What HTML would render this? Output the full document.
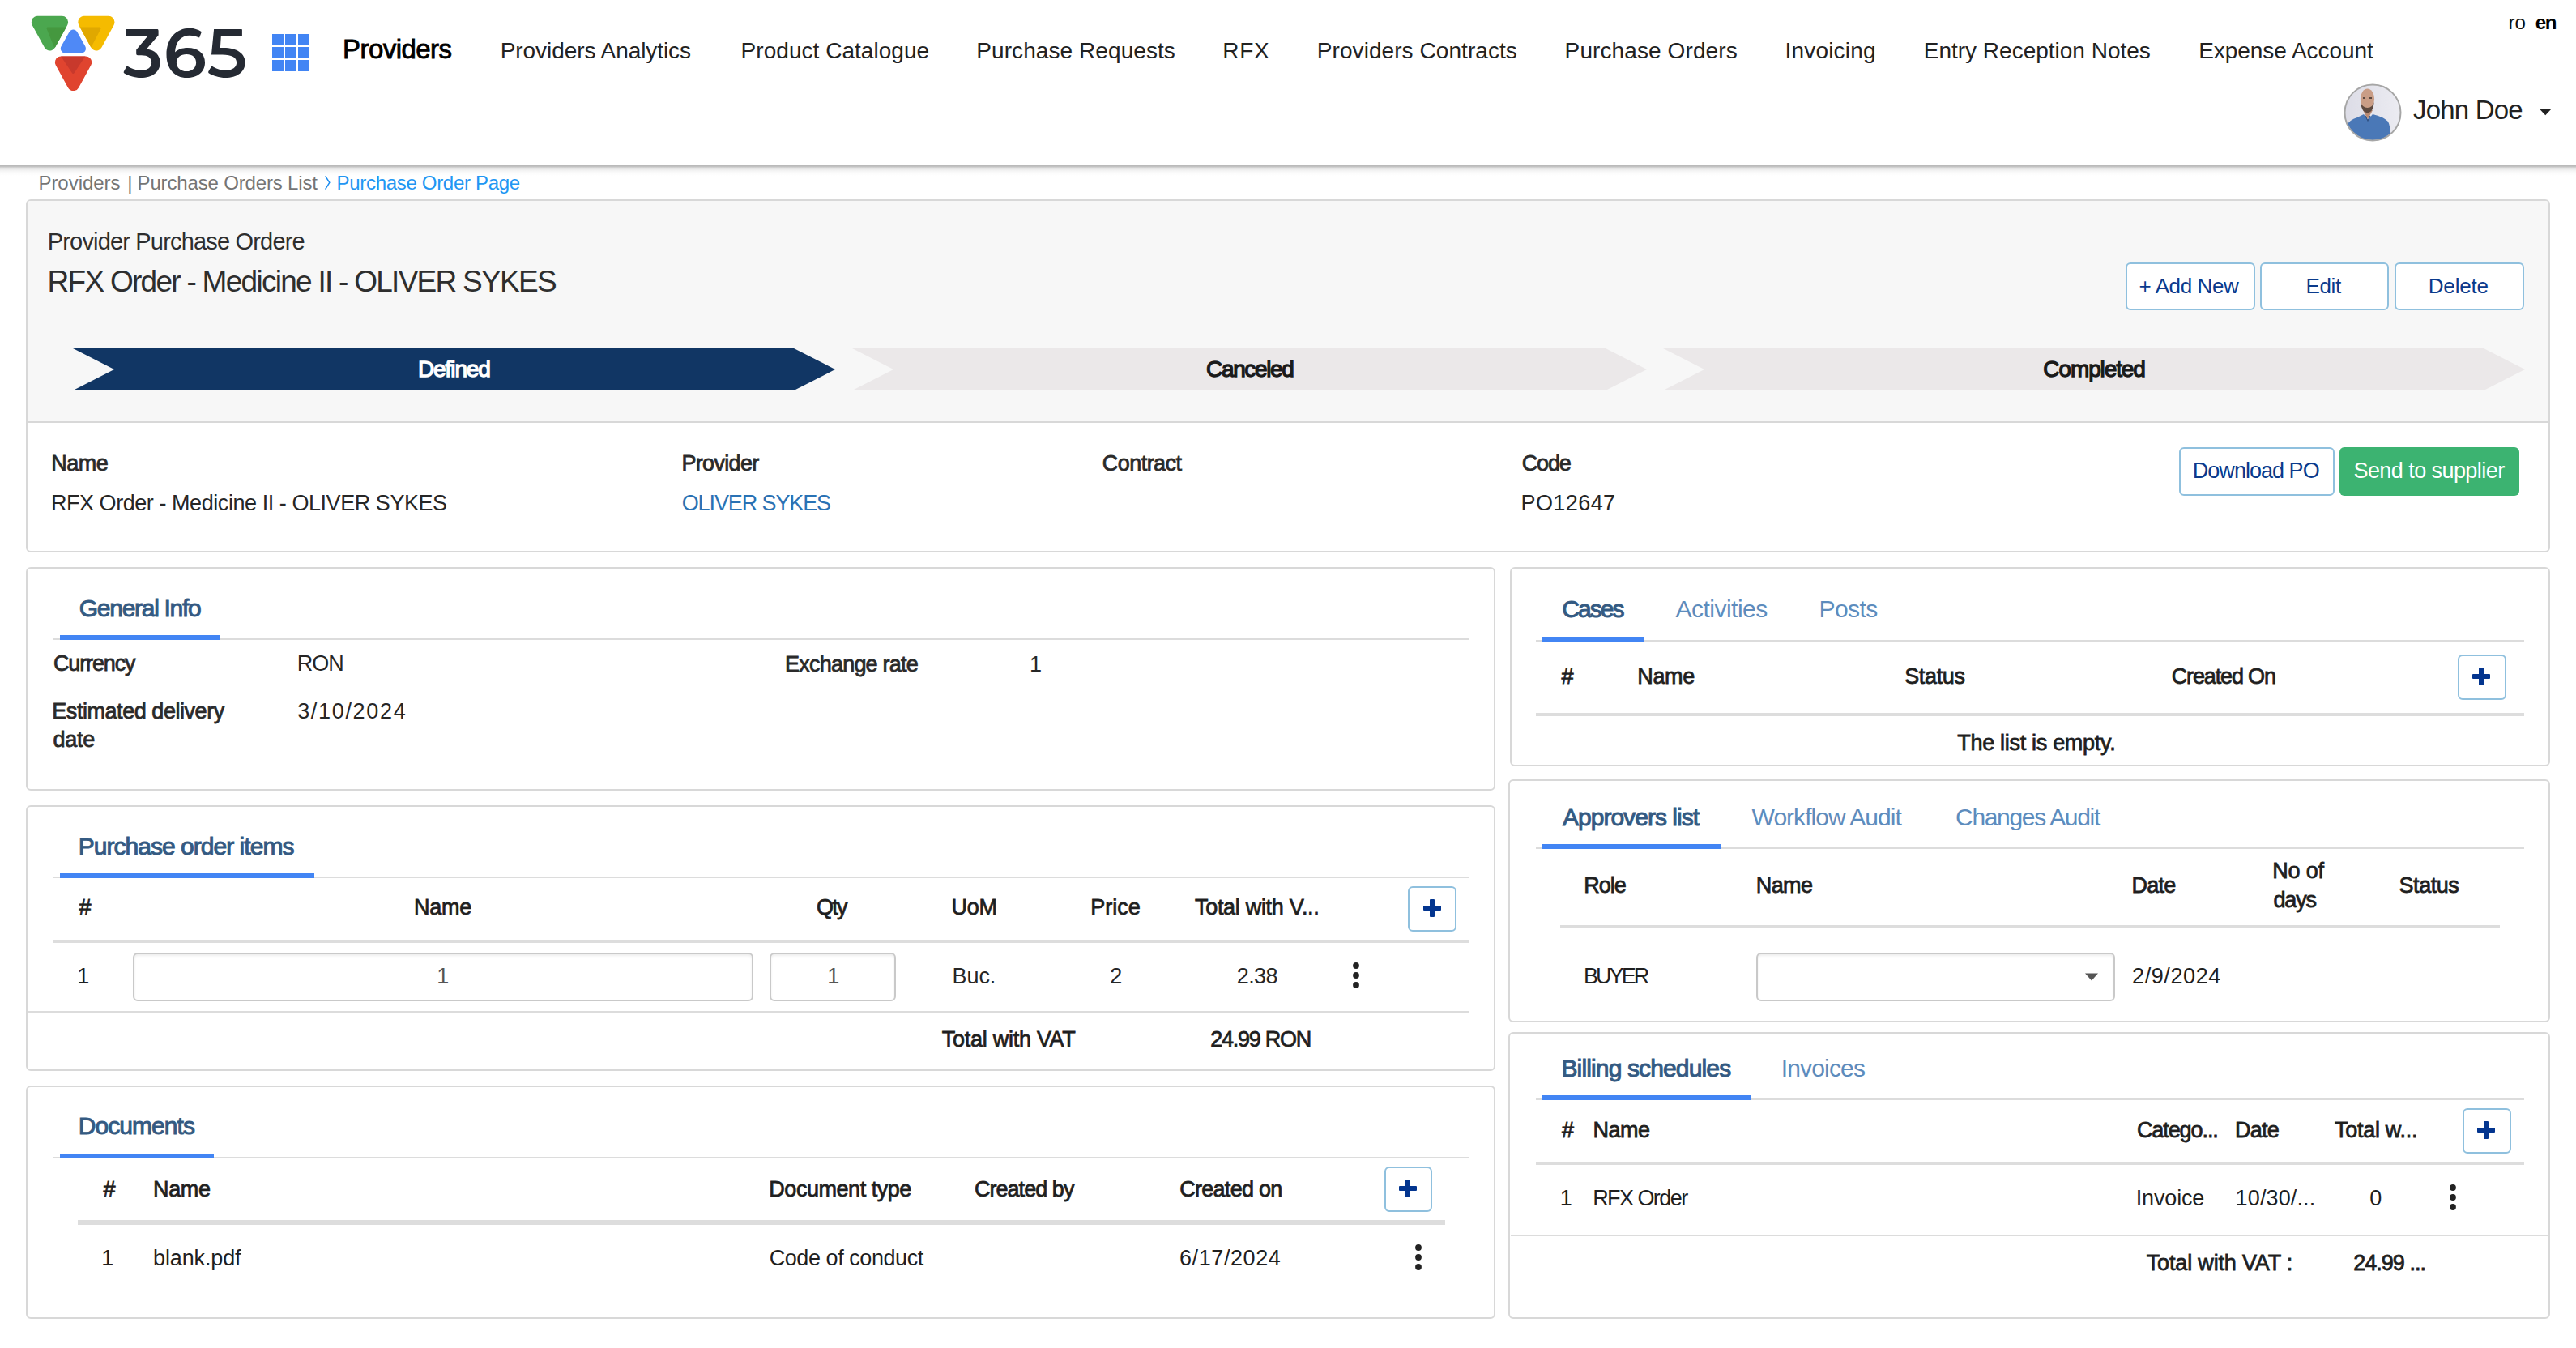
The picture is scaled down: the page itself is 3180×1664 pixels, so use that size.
<!DOCTYPE html>
<html><head><meta charset="utf-8"><title>Purchase Order Page</title>
<style>
html,body{margin:0;padding:0;width:3180px;height:1664px;overflow:hidden;background:#fff;font-family:"Liberation Sans", sans-serif;}
.a{position:absolute;box-sizing:border-box;}
.t{position:absolute;white-space:nowrap;font-family:"Liberation Sans", sans-serif;}
.card{position:absolute;box-sizing:border-box;border:2px solid #d8d8d8;border-radius:6px;background:#fff;}
.btn{position:absolute;box-sizing:border-box;border:2px solid #8fc0de;border-radius:6px;background:#fff;}
.hl{position:absolute;background:#dcdcdc;}
</style></head><body>
<div class="a" style="left:0;top:204px;width:3180px;height:13px;background:linear-gradient(to bottom,rgba(0,0,0,.27) 0px,rgba(0,0,0,.27) 1px,rgba(0,0,0,.15) 3px,rgba(0,0,0,.07) 5.5px,rgba(0,0,0,.04) 7px,rgba(0,0,0,.015) 9.5px,rgba(0,0,0,0) 13px)"></div>
<svg class="a" style="left:0;top:0" width="160" height="130" viewBox="0 0 160 130">
<defs>
<mask id="cg" maskUnits="userSpaceOnUse" x="0" y="0" width="160" height="130"><polygon points="46.3,27.3 76.6,27.3 61.45,55" fill="#fff" stroke="#fff" stroke-width="15" stroke-linejoin="round"/></mask>
<mask id="cy" maskUnits="userSpaceOnUse" x="0" y="0" width="160" height="130"><polygon points="103.8,27.3 134,27.3 118.9,55" fill="#fff" stroke="#fff" stroke-width="15" stroke-linejoin="round"/></mask>
<mask id="cr" maskUnits="userSpaceOnUse" x="0" y="0" width="160" height="130"><polygon points="75.4,76.9 105.7,76.9 90.55,104.6" fill="#fff" stroke="#fff" stroke-width="15" stroke-linejoin="round"/></mask>
</defs>
<g stroke-linejoin="round">
<polygon points="46.3,27.3 76.6,27.3 61.45,55" fill="#4ba74f" stroke="#4ba74f" stroke-width="15"/>
<polygon points="103.8,27.3 134,27.3 118.9,55" fill="#f5bb00" stroke="#f5bb00" stroke-width="15"/>
<polygon points="90.4,42 100.5,60 80.3,60" fill="#4f89f6" stroke="#4f89f6" stroke-width="11"/>
<polygon points="75.4,76.9 105.7,76.9 90.55,104.6" fill="#e0442f" stroke="#e0442f" stroke-width="15"/>
</g>
<polygon mask="url(#cg)" points="59,35 90,35 68,57" fill="#45983f" stroke="#45983f" stroke-width="3" stroke-linejoin="round"/>
<polygon mask="url(#cy)" points="90,35 123,35 111.5,57" fill="#e0a800" stroke="#e0a800" stroke-width="3" stroke-linejoin="round"/>
<polygon mask="url(#cr)" points="76,68 104.5,68 90.3,89.5" fill="#c8392c" stroke="#c8392c" stroke-width="3" stroke-linejoin="round"/>
</svg>
<svg class="a" style="left:0;top:0" width="320" height="110" viewBox="0 0 320 110"><g fill="#252a33" fill-rule="evenodd">
<path d="M155,35.9 L194.6,35.9 Q195.6,36.3 195.6,38 L195.6,43.6 L180.9,60.4 C191,61.5 197.7,68 197.7,77.2 C197.7,88.5 188,96.1 174.1,96.1 C166,96.1 158.5,93.5 153.1,90.3 Q152.3,89.5 152.9,88.3 L156.7,81.2 C161.5,84.5 167.5,86.8 174.1,86.8 C182.5,86.8 187.1,83 187.1,77.2 C187.1,71.5 182.5,68.2 174.5,68.2 L170,68.2 Q168.2,68.2 168.2,66.4 L168.2,61.5 L181.9,44.9 L155,44.9 Z"/>
<path d="M248.9,39.3 C244.5,36.3 239.5,34.7 234.3,34.7 C217,34.7 205.5,48 205.5,67.3 C205.5,85 215.5,96.1 230.6,96.1 C244,96.1 253,88.5 253,77.2 C253,66 244.5,58.9 231.5,58.9 C225,58.9 219.5,61 216,64.5 C216.8,51.5 223.5,43.7 234,43.7 C238.5,43.7 242.5,44.8 246.1,46.5 Z M217.9,77.2 C217.9,83.5 223,88.1 230.3,88.1 C237.5,88.1 242.1,83.5 242.1,77.2 C242.1,71 237.5,67 230.3,67 C223,67 217.9,71 217.9,77.2 Z"/>
<path d="M264.1,35.9 L298.4,35.9 Q298.9,36.2 298.9,37 L298.9,44.9 L272.8,44.9 L271.9,58.9 L276,58.9 C292.5,58.9 302.7,66 302.7,77.2 C302.7,88.5 292.5,96.1 278.4,96.1 C270.5,96.1 263,93.5 257.6,90.3 Q256.8,89.5 257.3,88.3 L261.4,81.2 C266,84.5 272,86.8 278.4,86.8 C287,86.8 292.1,83 292.1,77.2 C292.1,71 286,67.6 274.5,67.6 L261,67.6 Z"/>
</g></svg>
<div class="a" style="left:336.4px;top:42.2px;width:13.4px;height:13.4px;background:#4285f4"></div>
<div class="a" style="left:336.4px;top:58.2px;width:13.4px;height:13.4px;background:#4285f4"></div>
<div class="a" style="left:336.4px;top:74.2px;width:13.4px;height:13.4px;background:#4285f4"></div>
<div class="a" style="left:352.4px;top:42.2px;width:13.4px;height:13.4px;background:#4285f4"></div>
<div class="a" style="left:352.4px;top:58.2px;width:13.4px;height:13.4px;background:#4285f4"></div>
<div class="a" style="left:352.4px;top:74.2px;width:13.4px;height:13.4px;background:#4285f4"></div>
<div class="a" style="left:368.4px;top:42.2px;width:13.4px;height:13.4px;background:#4285f4"></div>
<div class="a" style="left:368.4px;top:58.2px;width:13.4px;height:13.4px;background:#4285f4"></div>
<div class="a" style="left:368.4px;top:74.2px;width:13.4px;height:13.4px;background:#4285f4"></div>
<svg class="a" style="left:2893px;top:103px" width="72" height="72" viewBox="0 0 72 72">
<defs><clipPath id="cc"><circle cx="36" cy="36" r="34"/></clipPath>
<linearGradient id="abg" x1="0" y1="0" x2="1" y2="0"><stop offset="0" stop-color="#dcdce6"/><stop offset="1" stop-color="#ececf2"/></linearGradient></defs>
<g clip-path="url(#cc)">
<rect width="72" height="72" fill="url(#abg)"/>
<path d="M2,72 L4,52 Q7,45 17,42 L25,38 L30,45 L36,38 Q49,41 55,47 Q58,52 59,72 Z" fill="#4a78b7"/>
<path d="M24,33 L36,33 L30,44 Z" fill="#b98b74"/>
<ellipse cx="29.5" cy="19" rx="8.6" ry="12.5" fill="#c99d86"/>
<path d="M21.3,23 Q22,35.5 29.5,36.5 Q37,35.5 37.7,23 Q36,29.5 29.5,30 Q23,29.5 21.3,23Z" fill="#5e4a40"/>
<path d="M24,18 L27,18 M32,18 L35,18" stroke="#3a2e2a" stroke-width="1.3"/>
<path d="M27,40 L30,46 L33,40" fill="none" stroke="#2f4f80" stroke-width="1.2"/>
</g>
<circle cx="36" cy="36" r="34.5" fill="none" stroke="#a6a6a6" stroke-width="2"/>
</svg>
<svg class="a" style="left:3134px;top:134px" width="17" height="9" viewBox="0 0 17 9"><polygon points="0.5,0 16,0 8.25,8.3" fill="#222"/></svg>
<svg class="a" style="left:398px;top:214px" width="14" height="24" viewBox="0 0 14 24"><polyline points="3.6,3.3 8.8,11.3 3.6,19.7" fill="none" stroke="#1a8cf0" stroke-width="1.5"/></svg>
<div class="card" style="left:32px;top:246px;width:3116px;height:436px;overflow:hidden"></div>
<div class="a" style="left:34px;top:248px;width:3112px;height:272px;background:#f7f7f7;border-top-left-radius:4px;border-top-right-radius:4px"></div>
<div class="a" style="left:34px;top:520px;width:3112px;height:2px;background:#d8d8d8"></div>
<div class="btn" style="left:2624px;top:324px;width:160px;height:59px;"></div>
<div class="btn" style="left:2790px;top:324px;width:159px;height:59px;"></div>
<div class="btn" style="left:2956px;top:324px;width:160px;height:59px;"></div>
<svg class="a" style="left:0;top:0" width="3180" height="500" viewBox="0 0 3180 500">
<polygon points="90,430 980,430 1031,456 980,482 90,482 141,456" fill="#113664"/>
<polygon points="1052,430 1982,430 2033,456 1982,482 1052,482 1103,456" fill="#ebe8e9"/>
<polygon points="2053,430 3066,430 3117,456 3066,482 2053,482 2104,456" fill="#ebe8e9"/>
</svg>
<div class="btn" style="left:2690px;top:552px;width:192px;height:60px;"></div>
<div class="a" style="left:2888px;top:552px;width:222px;height:60px;background:#3cb371;border-radius:6px"></div>
<div class="card" style="left:32px;top:700px;width:1814px;height:276px;"></div>
<div class="a" style="left:66px;top:788px;width:1748px;height:2px;background:#dcdcdc"></div>
<div class="a" style="left:74px;top:784px;width:198px;height:6px;background:#4285f4"></div>
<div class="card" style="left:32px;top:994px;width:1814px;height:328px;"></div>
<div class="a" style="left:66px;top:1082px;width:1748px;height:2px;background:#dcdcdc"></div>
<div class="a" style="left:74px;top:1078px;width:314px;height:6px;background:#4285f4"></div>
<div class="btn" style="left:1738px;top:1094px;width:60px;height:56px;"></div>
<div class="a" style="left:1757.0px;top:1118.1px;width:22px;height:5.8px;background:#03358f;border-radius:1px"></div>
<div class="a" style="left:1765.1px;top:1110.0px;width:5.8px;height:22px;background:#03358f;border-radius:1px"></div>
<div class="a" style="left:66px;top:1160px;width:1748px;height:4px;background:#dddddd"></div>
<div class="a" style="left:164px;top:1176px;width:766px;height:60px;border:2px solid #c9c9c9;border-radius:6px;box-shadow:inset 0 2px 3px rgba(0,0,0,.07)"></div>
<div class="a" style="left:950px;top:1176px;width:156px;height:60px;border:2px solid #c9c9c9;border-radius:6px;box-shadow:inset 0 2px 3px rgba(0,0,0,.07)"></div>
<svg class="a" style="left:1667.75px;top:1186px" width="12" height="36" viewBox="0 0 12 36"><circle cx="6" cy="6" r="3.9" fill="#222"/><circle cx="6" cy="18" r="3.9" fill="#222"/><circle cx="6" cy="30" r="3.9" fill="#222"/></svg>
<div class="a" style="left:34px;top:1247.5px;width:1780px;height:2px;background:#dcdcdc"></div>
<div class="card" style="left:32px;top:1340px;width:1814px;height:288px;"></div>
<div class="a" style="left:66px;top:1428px;width:1748px;height:2px;background:#dcdcdc"></div>
<div class="a" style="left:74px;top:1424px;width:190px;height:6px;background:#4285f4"></div>
<div class="btn" style="left:1708.5px;top:1440px;width:59px;height:56px;"></div>
<div class="a" style="left:1727.0px;top:1464.1px;width:22px;height:5.8px;background:#03358f;border-radius:1px"></div>
<div class="a" style="left:1735.1px;top:1456.0px;width:5.8px;height:22px;background:#03358f;border-radius:1px"></div>
<div class="a" style="left:96px;top:1506px;width:1688px;height:6px;background:#dddddd"></div>
<svg class="a" style="left:1745px;top:1534px" width="12" height="36" viewBox="0 0 12 36"><circle cx="6" cy="6" r="3.9" fill="#222"/><circle cx="6" cy="18" r="3.9" fill="#222"/><circle cx="6" cy="30" r="3.9" fill="#222"/></svg>
<div class="card" style="left:1864px;top:700px;width:1284px;height:246px;"></div>
<div class="a" style="left:1896px;top:790px;width:1220px;height:2px;background:#dcdcdc"></div>
<div class="a" style="left:1904px;top:786px;width:126px;height:6px;background:#4285f4"></div>
<div class="btn" style="left:3034px;top:808px;width:60px;height:56px;"></div>
<div class="a" style="left:3052.0px;top:832.1px;width:22px;height:5.8px;background:#03358f;border-radius:1px"></div>
<div class="a" style="left:3060.1px;top:824.0px;width:5.8px;height:22px;background:#03358f;border-radius:1px"></div>
<div class="a" style="left:1896px;top:880px;width:1220px;height:4px;background:#dddddd"></div>
<div class="card" style="left:1862px;top:962px;width:1286px;height:300px;"></div>
<div class="a" style="left:1896px;top:1046px;width:1220px;height:2px;background:#dcdcdc"></div>
<div class="a" style="left:1904px;top:1042px;width:220px;height:6px;background:#4285f4"></div>
<div class="a" style="left:1926px;top:1142px;width:1160px;height:4px;background:#dddddd"></div>
<div class="a" style="left:2168px;top:1176px;width:443px;height:60px;border:2px solid #c9c9c9;border-radius:6px;box-shadow:inset 0 2px 3px rgba(0,0,0,.07)"></div>
<svg class="a" style="left:2573px;top:1201px" width="18" height="10" viewBox="0 0 18 10"><polygon points="1,0.5 17,0.5 9,9.5" fill="#555"/></svg>
<div class="card" style="left:1862px;top:1274px;width:1286px;height:354px;"></div>
<div class="a" style="left:1896px;top:1356px;width:1220px;height:2px;background:#dcdcdc"></div>
<div class="a" style="left:1904px;top:1352px;width:258px;height:6px;background:#4285f4"></div>
<div class="btn" style="left:3040px;top:1368px;width:59.5px;height:55.5px;"></div>
<div class="a" style="left:3057.75px;top:1391.85px;width:22px;height:5.8px;background:#03358f;border-radius:1px"></div>
<div class="a" style="left:3065.85px;top:1383.75px;width:5.8px;height:22px;background:#03358f;border-radius:1px"></div>
<div class="a" style="left:1896px;top:1434px;width:1220px;height:4px;background:#dddddd"></div>
<div class="a" style="left:1865px;top:1524px;width:1281px;height:2px;background:#dcdcdc"></div>
<svg class="a" style="left:3022px;top:1460px" width="12" height="36" viewBox="0 0 12 36"><circle cx="6" cy="6" r="3.9" fill="#222"/><circle cx="6" cy="18" r="3.9" fill="#222"/><circle cx="6" cy="30" r="3.9" fill="#222"/></svg>
<span class="t" style="left:423.12px;top:44.10px;font-size:33px;line-height:33px;color:#000;-webkit-text-stroke:0.8px #000;letter-spacing:-0.571px">Providers</span><span class="t" style="left:617.71px;top:49.00px;font-size:28px;line-height:28px;color:#222;letter-spacing:-0.068px">Providers Analytics</span><span class="t" style="left:914.61px;top:49.00px;font-size:28px;line-height:28px;color:#222;letter-spacing:0.037px">Product Catalogue</span><span class="t" style="left:1205.31px;top:49.00px;font-size:28px;line-height:28px;color:#222;letter-spacing:0.075px">Purchase Requests</span><span class="t" style="left:1509.31px;top:49.00px;font-size:28px;line-height:28px;color:#222;letter-spacing:0.744px">RFX</span><span class="t" style="left:1625.81px;top:49.00px;font-size:28px;line-height:28px;color:#222;letter-spacing:0.067px">Providers Contracts</span><span class="t" style="left:1931.61px;top:49.00px;font-size:28px;line-height:28px;color:#222;letter-spacing:0.102px">Purchase Orders</span><span class="t" style="left:2203.41px;top:49.00px;font-size:28px;line-height:28px;color:#222;letter-spacing:0.206px">Invoicing</span><span class="t" style="left:2374.71px;top:49.00px;font-size:28px;line-height:28px;color:#222">Entry Reception Notes</span><span class="t" style="left:2714.21px;top:49.00px;font-size:28px;line-height:28px;color:#222;letter-spacing:-0.059px">Expense Account</span><span class="t" style="left:3096.40px;top:16.00px;font-size:24px;line-height:24px;color:#111;letter-spacing:0.108px">ro</span><span class="t" style="left:3129.70px;top:16.00px;font-size:24px;line-height:24px;color:#000;font-weight:700;letter-spacing:-1.348px">en</span><span class="t" style="left:2979.08px;top:119.00px;font-size:33px;line-height:33px;color:#222;letter-spacing:-0.816px">John Doe</span><span class="t" style="left:47.40px;top:214.00px;font-size:24px;line-height:24px;color:#757575;letter-spacing:-0.021px">Providers</span><span class="t" style="left:157.20px;top:214.00px;font-size:24px;line-height:24px;color:#757575">|</span><span class="t" style="left:169.60px;top:214.00px;font-size:24px;line-height:24px;color:#757575;letter-spacing:-0.163px">Purchase Orders List</span><span class="t" style="left:415.60px;top:214.00px;font-size:24px;line-height:24px;color:#2196f3;letter-spacing:-0.315px">Purchase Order Page</span><span class="t" style="left:58.73px;top:284.00px;font-size:29px;line-height:29px;color:#2e2e2e;letter-spacing:-0.823px">Provider Purchase Ordere</span><span class="t" style="left:58.61px;top:329.00px;font-size:37px;line-height:37px;color:#2e2e2e;letter-spacing:-1.729px">RFX Order - Medicine II - OLIVER SYKES</span><span class="t" style="left:2640.53px;top:340.00px;font-size:26px;line-height:26px;color:#0a3a8c;letter-spacing:-0.407px">+ Add New</span><span class="t" style="left:2846.47px;top:340.00px;font-size:26px;line-height:26px;color:#0a3a8c;letter-spacing:-0.370px">Edit</span><span class="t" style="left:2997.72px;top:340.00px;font-size:26px;line-height:26px;color:#0a3a8c;letter-spacing:-0.164px">Delete</span><span class="t" style="left:515.96px;top:442.00px;font-size:28px;line-height:28px;color:#fff;-webkit-text-stroke:1.3px #fff;letter-spacing:-1.092px">Defined</span><span class="t" style="left:1489.04px;top:442.00px;font-size:28px;line-height:28px;color:#1a1a1a;-webkit-text-stroke:1.3px #1a1a1a;letter-spacing:-1.345px">Canceled</span><span class="t" style="left:2522.34px;top:442.00px;font-size:28px;line-height:28px;color:#1a1a1a;-webkit-text-stroke:1.3px #1a1a1a;letter-spacing:-1.103px">Completed</span><span class="t" style="left:63.29px;top:558.50px;font-size:27px;line-height:27px;color:#2a2a2a;-webkit-text-stroke:0.8px #2a2a2a;letter-spacing:-0.539px">Name</span><span class="t" style="left:841.39px;top:558.60px;font-size:27px;line-height:27px;color:#2a2a2a;-webkit-text-stroke:0.8px #2a2a2a;letter-spacing:-0.671px">Provider</span><span class="t" style="left:1360.83px;top:558.80px;font-size:27px;line-height:27px;color:#2a2a2a;-webkit-text-stroke:0.8px #2a2a2a;letter-spacing:-0.553px">Contract</span><span class="t" style="left:1878.73px;top:558.80px;font-size:27px;line-height:27px;color:#2a2a2a;-webkit-text-stroke:0.8px #2a2a2a;letter-spacing:-1.162px">Code</span><span class="t" style="left:62.89px;top:608.00px;font-size:27px;line-height:27px;color:#262626;letter-spacing:-0.443px">RFX Order - Medicine II - OLIVER SYKES</span><span class="t" style="left:841.73px;top:607.75px;font-size:27px;line-height:27px;color:#2a72b4;letter-spacing:-1.107px">OLIVER SYKES</span><span class="t" style="left:1877.49px;top:607.70px;font-size:27px;line-height:27px;color:#262626;letter-spacing:0.419px">PO12647</span><span class="t" style="left:2706.79px;top:568.00px;font-size:27px;line-height:27px;color:#0a3a8c;letter-spacing:-0.971px">Download PO</span><span class="t" style="left:2905.46px;top:568.00px;font-size:27px;line-height:27px;color:#fff;letter-spacing:-0.564px">Send to supplier</span><span class="t" style="left:97.84px;top:735.50px;font-size:30px;line-height:30px;color:#345a82;-webkit-text-stroke:1.0px #345a82;letter-spacing:-1.294px">General Info</span><span class="t" style="left:65.88px;top:806.00px;font-size:27px;line-height:27px;color:#2a2a2a;-webkit-text-stroke:0.8px #2a2a2a;letter-spacing:-1.116px">Currency</span><span class="t" style="left:366.64px;top:806.00px;font-size:27px;line-height:27px;color:#262626;letter-spacing:-0.969px">RON</span><span class="t" style="left:64.29px;top:865.20px;font-size:27px;line-height:27px;color:#2a2a2a;-webkit-text-stroke:0.8px #2a2a2a;letter-spacing:-0.452px">Estimated delivery</span><span class="t" style="left:65.56px;top:900.00px;font-size:27px;line-height:27px;color:#2a2a2a;-webkit-text-stroke:0.8px #2a2a2a;letter-spacing:-0.304px">date</span><span class="t" style="left:367.16px;top:865.20px;font-size:27px;line-height:27px;color:#262626;letter-spacing:1.675px">3/10/2024</span><span class="t" style="left:969.09px;top:807.00px;font-size:27px;line-height:27px;color:#2a2a2a;-webkit-text-stroke:0.8px #2a2a2a;letter-spacing:-0.793px">Exchange rate</span><span class="t" style="left:1271.01px;top:807.00px;font-size:27px;line-height:27px;color:#262626">1</span><span class="t" style="left:96.66px;top:1029.90px;font-size:30px;line-height:30px;color:#345a82;-webkit-text-stroke:1.0px #345a82;letter-spacing:-0.965px">Purchase order items</span><span class="t" style="left:97.40px;top:1106.50px;font-size:27px;line-height:27px;color:#1f1f1f;-webkit-text-stroke:0.8px #1f1f1f">#</span><span class="t" style="left:510.89px;top:1106.50px;font-size:27px;line-height:27px;color:#1f1f1f;-webkit-text-stroke:0.8px #1f1f1f;letter-spacing:-0.206px">Name</span><span class="t" style="left:1007.93px;top:1106.50px;font-size:27px;line-height:27px;color:#1f1f1f;-webkit-text-stroke:0.8px #1f1f1f;letter-spacing:-1.669px">Qty</span><span class="t" style="left:1174.51px;top:1106.50px;font-size:27px;line-height:27px;color:#1f1f1f;-webkit-text-stroke:0.8px #1f1f1f;letter-spacing:-0.300px">UoM</span><span class="t" style="left:1346.29px;top:1106.50px;font-size:27px;line-height:27px;color:#1f1f1f;-webkit-text-stroke:0.8px #1f1f1f;letter-spacing:-0.028px">Price</span><span class="t" style="left:1474.98px;top:1106.50px;font-size:27px;line-height:27px;color:#1f1f1f;-webkit-text-stroke:0.8px #1f1f1f;letter-spacing:-0.302px">Total with V...</span><span class="t" style="left:95.31px;top:1192.00px;font-size:27px;line-height:27px;color:#1f1f1f">1</span><span class="t" style="left:539.31px;top:1192.00px;font-size:27px;line-height:27px;color:#555">1</span><span class="t" style="left:1021.31px;top:1192.00px;font-size:27px;line-height:27px;color:#555">1</span><span class="t" style="left:1175.59px;top:1192.00px;font-size:27px;line-height:27px;color:#262626;letter-spacing:-0.093px">Buc.</span><span class="t" style="left:1370.23px;top:1192.00px;font-size:27px;line-height:27px;color:#262626">2</span><span class="t" style="left:1526.73px;top:1192.00px;font-size:27px;line-height:27px;color:#262626;letter-spacing:-0.563px">2.38</span><span class="t" style="left:1162.78px;top:1270.30px;font-size:27px;line-height:27px;color:#1f1f1f;-webkit-text-stroke:0.8px #1f1f1f;letter-spacing:-0.267px">Total with VAT</span><span class="t" style="left:1494.33px;top:1270.30px;font-size:27px;line-height:27px;color:#1f1f1f;-webkit-text-stroke:0.8px #1f1f1f;letter-spacing:-1.262px">24.99 RON</span><span class="t" style="left:96.66px;top:1375.40px;font-size:30px;line-height:30px;color:#345a82;-webkit-text-stroke:1.0px #345a82;letter-spacing:-0.931px">Documents</span><span class="t" style="left:127.40px;top:1454.60px;font-size:27px;line-height:27px;color:#1f1f1f;-webkit-text-stroke:0.8px #1f1f1f">#</span><span class="t" style="left:188.99px;top:1454.60px;font-size:27px;line-height:27px;color:#1f1f1f;-webkit-text-stroke:0.8px #1f1f1f;letter-spacing:-0.339px">Name</span><span class="t" style="left:949.29px;top:1454.60px;font-size:27px;line-height:27px;color:#1f1f1f;-webkit-text-stroke:0.8px #1f1f1f;letter-spacing:-0.457px">Document type</span><span class="t" style="left:1202.93px;top:1454.60px;font-size:27px;line-height:27px;color:#1f1f1f;-webkit-text-stroke:0.8px #1f1f1f;letter-spacing:-0.956px">Created by</span><span class="t" style="left:1456.33px;top:1454.60px;font-size:27px;line-height:27px;color:#1f1f1f;-webkit-text-stroke:0.8px #1f1f1f;letter-spacing:-0.745px">Created on</span><span class="t" style="left:125.31px;top:1540.30px;font-size:27px;line-height:27px;color:#1f1f1f">1</span><span class="t" style="left:189.01px;top:1540.30px;font-size:27px;line-height:27px;color:#1f1f1f;letter-spacing:-0.123px">blank.pdf</span><span class="t" style="left:949.73px;top:1540.30px;font-size:27px;line-height:27px;color:#1f1f1f;letter-spacing:-0.440px">Code of conduct</span><span class="t" style="left:1455.93px;top:1540.30px;font-size:27px;line-height:27px;color:#1f1f1f;letter-spacing:0.603px">6/17/2024</span><span class="t" style="left:1928.29px;top:737.00px;font-size:30px;line-height:30px;color:#345a82;-webkit-text-stroke:1.0px #345a82;letter-spacing:-1.923px">Cases</span><span class="t" style="left:2068.60px;top:737.00px;font-size:30px;line-height:30px;color:#5d8cbd;letter-spacing:-0.525px">Activities</span><span class="t" style="left:2245.56px;top:737.00px;font-size:30px;line-height:30px;color:#5d8cbd;letter-spacing:-0.587px">Posts</span><span class="t" style="left:1927.40px;top:822.40px;font-size:27px;line-height:27px;color:#1f1f1f;-webkit-text-stroke:0.8px #1f1f1f">#</span><span class="t" style="left:2021.29px;top:822.40px;font-size:27px;line-height:27px;color:#1f1f1f;-webkit-text-stroke:0.8px #1f1f1f;letter-spacing:-0.339px">Name</span><span class="t" style="left:2351.16px;top:822.40px;font-size:27px;line-height:27px;color:#1f1f1f;-webkit-text-stroke:0.8px #1f1f1f;letter-spacing:-0.351px">Status</span><span class="t" style="left:2680.73px;top:822.40px;font-size:27px;line-height:27px;color:#1f1f1f;-webkit-text-stroke:0.8px #1f1f1f;letter-spacing:-1.144px">Created On</span><span class="t" style="left:2416.28px;top:904.30px;font-size:27px;line-height:27px;color:#1f1f1f;-webkit-text-stroke:0.8px #1f1f1f;letter-spacing:-0.305px">The list is empty.</span><span class="t" style="left:1928.90px;top:994.20px;font-size:30px;line-height:30px;color:#345a82;-webkit-text-stroke:1.0px #345a82;letter-spacing:-0.964px">Approvers list</span><span class="t" style="left:2162.60px;top:994.20px;font-size:30px;line-height:30px;color:#5d8cbd;letter-spacing:-0.978px">Workflow Audit</span><span class="t" style="left:2414.09px;top:994.20px;font-size:30px;line-height:30px;color:#5d8cbd;letter-spacing:-1.333px">Changes Audit</span><span class="t" style="left:1955.29px;top:1080.30px;font-size:27px;line-height:27px;color:#1f1f1f;-webkit-text-stroke:0.8px #1f1f1f;letter-spacing:-0.975px">Role</span><span class="t" style="left:2167.79px;top:1080.30px;font-size:27px;line-height:27px;color:#1f1f1f;-webkit-text-stroke:0.8px #1f1f1f;letter-spacing:-0.606px">Name</span><span class="t" style="left:2631.59px;top:1080.30px;font-size:27px;line-height:27px;color:#1f1f1f;-webkit-text-stroke:0.8px #1f1f1f;letter-spacing:-0.776px">Date</span><span class="t" style="left:2805.29px;top:1062.00px;font-size:27px;line-height:27px;color:#1f1f1f;-webkit-text-stroke:0.8px #1f1f1f;letter-spacing:-0.179px">No of</span><span class="t" style="left:2806.56px;top:1098.30px;font-size:27px;line-height:27px;color:#1f1f1f;-webkit-text-stroke:0.8px #1f1f1f;letter-spacing:-1.215px">days</span><span class="t" style="left:2961.56px;top:1080.30px;font-size:27px;line-height:27px;color:#1f1f1f;-webkit-text-stroke:0.8px #1f1f1f;letter-spacing:-0.451px">Status</span><span class="t" style="left:1954.89px;top:1192.00px;font-size:27px;line-height:27px;color:#1f1f1f;letter-spacing:-2.895px">BUYER</span><span class="t" style="left:2632.03px;top:1192.00px;font-size:27px;line-height:27px;color:#1f1f1f;letter-spacing:0.605px">2/9/2024</span><span class="t" style="left:1927.46px;top:1304.00px;font-size:30px;line-height:30px;color:#345a82;-webkit-text-stroke:1.0px #345a82;letter-spacing:-0.861px">Billing schedules</span><span class="t" style="left:2198.66px;top:1304.00px;font-size:30px;line-height:30px;color:#5d8cbd;letter-spacing:-0.825px">Invoices</span><span class="t" style="left:1927.90px;top:1382.40px;font-size:27px;line-height:27px;color:#1f1f1f;-webkit-text-stroke:0.8px #1f1f1f">#</span><span class="t" style="left:1966.59px;top:1382.40px;font-size:27px;line-height:27px;color:#1f1f1f;-webkit-text-stroke:0.8px #1f1f1f;letter-spacing:-0.539px">Name</span><span class="t" style="left:2637.93px;top:1382.40px;font-size:27px;line-height:27px;color:#1f1f1f;-webkit-text-stroke:0.8px #1f1f1f;letter-spacing:-1.083px">Catego...</span><span class="t" style="left:2758.99px;top:1382.40px;font-size:27px;line-height:27px;color:#1f1f1f;-webkit-text-stroke:0.8px #1f1f1f;letter-spacing:-0.743px">Date</span><span class="t" style="left:2881.98px;top:1382.40px;font-size:27px;line-height:27px;color:#1f1f1f;-webkit-text-stroke:0.8px #1f1f1f;letter-spacing:-0.276px">Total w...</span><span class="t" style="left:1925.81px;top:1466.40px;font-size:27px;line-height:27px;color:#1f1f1f">1</span><span class="t" style="left:1966.19px;top:1466.40px;font-size:27px;line-height:27px;color:#1f1f1f;letter-spacing:-1.572px">RFX Order</span><span class="t" style="left:2636.69px;top:1466.40px;font-size:27px;line-height:27px;color:#1f1f1f;letter-spacing:-0.141px">Invoice</span><span class="t" style="left:2759.61px;top:1466.40px;font-size:27px;line-height:27px;color:#1f1f1f;letter-spacing:0.119px">10/30/...</span><span class="t" style="left:2925.16px;top:1466.40px;font-size:27px;line-height:27px;color:#1f1f1f">0</span><span class="t" style="left:2649.78px;top:1545.80px;font-size:27px;line-height:27px;color:#1f1f1f;-webkit-text-stroke:0.8px #1f1f1f;letter-spacing:-0.166px">Total with VAT :</span><span class="t" style="left:2905.13px;top:1545.80px;font-size:27px;line-height:27px;color:#1f1f1f;-webkit-text-stroke:0.8px #1f1f1f;letter-spacing:-0.958px">24.99 ...</span>
</body></html>
